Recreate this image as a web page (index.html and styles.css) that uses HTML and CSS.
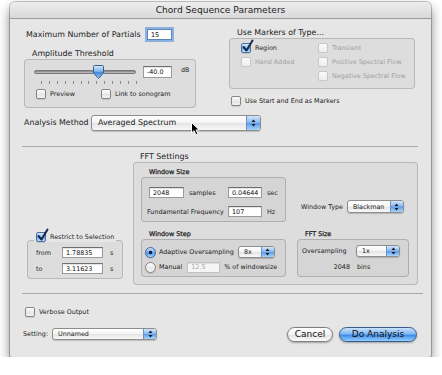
FILE: index.html
```html
<!DOCTYPE html>
<html lang="en">
<head>
	<meta charset="utf-8">
	<title>Chord Sequence Parameters</title>
	<link rel="stylesheet" href="styles.css">
</head>
<body>
	<div class="window">
		<div class="titlebar">Chord Sequence Parameters</div>
		<div class="content">
			<div class="top">
				<div class="left-col">
					<div class="partials">
						<span class="big partials-label">Maximum Number of Partials</span>
						<input class="field partials-input" type="text" value="15">
					</div>
					<div class="group-title big amp-title">Amplitude Threshold</div>
					<div class="group amp">
						<div class="slider-row">
							<div class="slider">
								<span class="track track-left"></span>
								<svg class="thumb" width="11" height="14" viewBox="0 0 11 14">
									<defs>
										<linearGradient id="thumbfill" x1="0" y1="0" x2="0" y2="1">
											<stop offset="0" stop-color="#dbeafb"/>
											<stop offset="0.45" stop-color="#7fb3ee"/>
											<stop offset="0.55" stop-color="#3f86df"/>
											<stop offset="1" stop-color="#9fd0fb"/>
										</linearGradient>
									</defs>
									<path d="M1.5 0.5 H9.5 A1 1 0 0 1 10.5 1.5 V8 L5.5 13.5 L0.5 8 V1.5 A1 1 0 0 1 1.5 0.5 Z" fill="url(#thumbfill)" stroke="#3b5d8c"/>
								</svg>
								<span class="track track-right"></span>
							</div>
							<input class="field db-input" type="text" value="-40.0">
							<span class="db">dB</span>
						</div>
						<div class="ticks">
							<i></i><i></i><i></i><i></i><i></i><i></i><i></i><i></i><i></i><i></i><i></i><i></i><i></i>
						</div>
						<div class="cb-row">
							<label class="cb"><span class="box"></span>Preview</label>
							<label class="cb"><span class="box"></span>Link to sonogram</label>
						</div>
					</div>
				</div>
				<div class="right-col">
					<div class="group-title big markers-title">Use Markers of Type...</div>
					<div class="group markers">
						<label class="cb"><span class="box on"><svg width="12" height="13" viewBox="0 0 12 13"><path d="M1.5 7 L4.5 10.5 L10.5 0.5" fill="none" stroke="#14284f" stroke-width="2" stroke-linecap="round" stroke-linejoin="round"/></svg></span>Region</label>
						<label class="cb off"><span class="box"></span>Transient</label>
						<label class="cb off"><span class="box"></span>Hand Added</label>
						<label class="cb off"><span class="box"></span>Positive Spectral Flow</label>
						<span></span>
						<label class="cb off"><span class="box"></span>Negative Spectral Flow</label>
					</div>
					<label class="cb start-end"><span class="box"></span>Use Start and End as Markers</label>
				</div>
			</div>

			<div class="method">
				<span class="big method-label">Analysis Method</span>
				<div class="popup popup-wide big">
					<span class="popup-text">Averaged Spectrum</span>
					<span class="arrows"><svg width="5" height="8" viewBox="0 0 5 8"><path d="M0.5 3 L2.5 0.5 L4.5 3Z M0.5 5 L2.5 7.5 L4.5 5Z" fill="#1b1b1b"/></svg></span>
				</div>
			</div>

			<div class="sep"></div>

			<div class="middle">
				<div class="restrict-col">
					<div class="restrict">
						<label class="cb restrict-head"><span class="box on"><svg width="12" height="13" viewBox="0 0 12 13"><path d="M1.5 7 L4.5 10.5 L10.5 0.5" fill="none" stroke="#14284f" stroke-width="2" stroke-linecap="round" stroke-linejoin="round"/></svg></span>Restrict to Selection</label>
						<div class="range-row">
							<span class="range-label">from</span>
							<input class="field range-input" type="text" value="1.78835">
							<span class="range-unit">s</span>
						</div>
						<div class="range-row">
							<span class="range-label">to</span>
							<input class="field range-input" type="text" value="3.11623">
							<span class="range-unit">s</span>
						</div>
					</div>
				</div>
				<div class="fft-col">
					<div class="group-title big fft-title">FFT Settings</div>
					<div class="group fft">
						<div class="fft-grid">
							<div class="section">
								<div class="sub-title">Window Size</div>
								<div class="subgroup size-box">
									<div class="size-grid">
										<div class="samples">
											<input class="field samples-input" type="text" value="2048">
											<span>samples</span>
										</div>
										<input class="field size-input" type="text" value="0.04644">
										<span class="unit">sec</span>
										<span class="nowrap">Fundamental Frequency</span>
										<input class="field size-input" type="text" value="107">
										<span class="unit">Hz</span>
									</div>
								</div>
							</div>
							<div class="window-type">
								<span>Window Type</span>
								<div class="popup popup-type">
									<span class="popup-text">Blackman</span>
									<span class="arrows"><svg width="5" height="8" viewBox="0 0 5 8"><path d="M0.5 3 L2.5 0.5 L4.5 3Z M0.5 5 L2.5 7.5 L4.5 5Z" fill="#1b1b1b"/></svg></span>
								</div>
							</div>
							<div class="section">
								<div class="sub-title">Window Step</div>
								<div class="subgroup step-box">
									<div class="radio-row">
										<span class="radio on"></span>
										<span>Adaptive Oversampling</span>
										<div class="popup popup-step">
											<span class="popup-text">8x</span>
											<span class="arrows"><svg width="5" height="8" viewBox="0 0 5 8"><path d="M0.5 3 L2.5 0.5 L4.5 3Z M0.5 5 L2.5 7.5 L4.5 5Z" fill="#1b1b1b"/></svg></span>
										</div>
									</div>
									<div class="radio-row">
										<span class="radio"></span>
										<span>Manual</span>
										<input class="field off manual-input" type="text" value="12.5" disabled>
										<span class="percent">% of windowsize</span>
									</div>
								</div>
							</div>
							<div class="section">
								<div class="sub-title">FFT Size</div>
								<div class="subgroup fftsize-box">
									<div class="fftsize-grid">
										<span>Oversampling</span>
										<div class="popup popup-size">
											<span class="popup-text">1x</span>
											<span class="arrows"><svg width="5" height="8" viewBox="0 0 5 8"><path d="M0.5 3 L2.5 0.5 L4.5 3Z M0.5 5 L2.5 7.5 L4.5 5Z" fill="#1b1b1b"/></svg></span>
										</div>
										<span class="bins-num">2048</span>
										<span class="bins">bins</span>
									</div>
								</div>
							</div>
						</div>
					</div>
				</div>
			</div>

			<div class="sep sep2"></div>

			<div class="bottom">
				<div class="bottom-left">
					<label class="cb verbose"><span class="box"></span>Verbose Output</label>
					<div class="setting">
						<span class="setting-label">Setting:</span>
						<div class="popup popup-setting">
							<span class="popup-text">Unnamed</span>
							<span class="arrows"><svg width="5" height="8" viewBox="0 0 5 8"><path d="M0.5 3 L2.5 0.5 L4.5 3Z M0.5 5 L2.5 7.5 L4.5 5Z" fill="#1b1b1b"/></svg></span>
						</div>
					</div>
				</div>
				<div class="buttons">
					<button class="btn cancel">Cancel</button>
					<button class="btn default">Do Analysis</button>
				</div>
			</div>
		</div>
		<svg class="cursor" width="10" height="14" viewBox="0 0 10 14">
			<path d="M0.5 0.5 L0.5 11 L3 8.7 L5 12.8 L6.9 11.9 L5 7.9 L8.3 7.9 Z" fill="#000" stroke="#fff" stroke-width="1" stroke-linejoin="round"/>
		</svg>
	</div>
</body>
</html>
```

FILE: styles.css
```css
* {
	box-sizing: border-box;
}
body {
	margin: 0;
	background: #fff;
	font-family: "DejaVu Sans", sans-serif;
	font-size: 6.4px;
	color: #1c1c1c;
}
.big {
	font-size: 7.9px;
}
.nowrap {
	white-space: nowrap;
}
.window {
	position: relative;
	width: 421px;
	height: 355px;
	margin: 2px 0 0 10px;
	background: #e6e6e6;
	border-radius: 5px 5px 2px 2px;
	box-shadow: 0 0 0 1px rgba(0, 0, 0, 0.22), 0 6px 12px rgba(0, 0, 0, 0.5);
}
.titlebar {
	height: 17px;
	line-height: 16px;
	text-align: center;
	font-size: 9.1px;
	color: #1e1e1e;
	background: linear-gradient(#ededed, #d9d9d9);
	border-bottom: 1px solid #9b9b9b;
	border-radius: 5px 5px 0 0;
}
.content {
	padding: 9px 13px 0 12px;
}

/* top part */
.top {
	display: flex;
}
.left-col {
	width: 174px;
	flex: none;
}
.partials {
	display: flex;
	align-items: center;
	height: 13px;
	padding-left: 4px;
}
.partials-label {
	width: 121px;
	white-space: nowrap;
}
.field {
	font: inherit;
	font-size: 6.4px;
	height: 11px;
	margin: 0;
	padding: 0 3px;
	color: #111;
	background: #fff;
	border: 1px solid #9a9a9a;
	border-top-color: #6f6f6f;
	box-shadow: inset 0 1px 1px rgba(0, 0, 0, 0.12);
	outline: none;
}
.field.off {
	color: #a9a9a9;
	background: #f6f6f6;
	border-color: #c2c2c2;
}
.partials-input {
	width: 25px;
	box-shadow: 0 0 0 2px #8ab2e0;
	border-color: #5d83b8;
}
.group-title {
	line-height: 10px;
	white-space: nowrap;
}
.amp-title {
	margin-top: 8px;
	padding-left: 10px;
}
.group {
	background: rgba(0, 0, 0, 0.04);
	border: 1px solid rgba(0, 0, 0, 0.17);
	border-radius: 4px;
}
.amp {
	margin-left: 2px;
	width: 172px;
	height: 49px;
	padding: 5px 0 0 9px;
}
.slider-row {
	display: flex;
	align-items: center;
	height: 14px;
}
.slider {
	display: flex;
	align-items: center;
	width: 102px;
	flex: none;
}
.track {
	height: 4px;
	background: linear-gradient(#7f7f7f, #c9c9c9);
	border: 1px solid #777;
	border-radius: 2px;
}
.track-left {
	width: 60px;
	margin-right: -1px;
}
.track-right {
	flex: 1;
	margin-left: -1px;
}
.thumb {
	flex: none;
	position: relative;
}
.db-input {
	width: 29px;
	height: 12px;
	margin-left: 7px;
}
.db {
	margin-left: 9px;
	align-self: flex-start;
	margin-top: 1px;
}
.ticks {
	display: flex;
	justify-content: space-between;
	width: 96px;
	height: 3px;
	margin: 2px 0 0 7px;
}
.ticks i {
	width: 1px;
	background: #8a8a8a;
}
.cb-row {
	display: flex;
	gap: 26px;
	height: 10px;
	align-items: center;
	margin: 5px 0 0 2px;
}

/* checkbox */
.cb {
	display: flex;
	align-items: center;
	gap: 4px;
	white-space: nowrap;
}
.box {
	position: relative;
	flex: none;
	width: 10px;
	height: 10px;
	border: 1px solid #868686;
	border-radius: 2px;
	background: linear-gradient(#fff, #e4e4e4 60%, #f4f4f4);
	box-shadow: 0 1px 1px rgba(0, 0, 0, 0.12);
}
.box.on {
	border-color: #4d6f9d;
	background: linear-gradient(#d6e8fb, #94c0ef 48%, #6ba6e7 52%, #bde0fd);
}
.box svg {
	position: absolute;
	left: 0;
	top: -4px;
	overflow: visible;
}
.cb.off {
	color: #9f9f9f;
}
.cb.off .box {
	border-color: #c6c6c6;
	background: linear-gradient(#fbfbfb, #ededed);
	box-shadow: none;
}

.right-col {
	width: 186px;
	margin-left: 33px;
	flex: none;
}
.markers-title {
	padding-left: 8px;
}
.markers {
	height: 51px;
	display: grid;
	grid-template-columns: 77px 1fr;
	grid-auto-rows: 14px;
	align-items: center;
	padding: 2px 0 0 11px;
}
.start-end {
	height: 12px;
	margin-top: 6px;
	padding-left: 2px;
}

/* popup menus */
.popup {
	display: flex;
	align-items: center;
	height: 12px;
	padding-left: 5px;
	border: 1px solid #8d8d8d;
	border-radius: 3px;
	background: linear-gradient(#fff, #f3f3f3 50%, #e4e4e4 52%, #f8f8f8);
	box-shadow: 0 1px 1px rgba(0, 0, 0, 0.18);
	overflow: hidden;
	white-space: nowrap;
}
.popup-text {
	flex: 1;
}
.arrows {
	display: flex;
	align-items: center;
	justify-content: center;
	align-self: stretch;
	width: 13px;
	flex: none;
	background: linear-gradient(#d5e7fb, #84b7f0 48%, #5b9be6 52%, #a9d5fc);
	border-left: 1px solid #6f91bf;
}
.method {
	display: flex;
	align-items: center;
	height: 17px;
	margin-top: 6px;
	padding-left: 2px;
}
.method-label {
	width: 67px;
	white-space: nowrap;
}
.popup-wide {
	width: 170px;
	height: 16px;
	padding-left: 6px;
}
.popup-wide .arrows {
	width: 14px;
}

.sep {
	height: 1px;
	background: #a9a9a9;
	margin-top: 15px;
}
.sep2 {
	margin-top: 8px;
	margin-right: -5px;
}

/* middle part */
.middle {
	display: flex;
	align-items: flex-end;
	margin-top: 4px;
}
.restrict-col {
	width: 111px;
	flex: none;
	padding: 0 0 6px 5px;
}
.restrict {
	width: 96px;
	padding: 0 0 4px 8px;
	border: 1px solid rgba(0, 0, 0, 0.17);
	border-radius: 4px;
	background: rgba(0, 0, 0, 0.04);
}
.restrict-head {
	width: fit-content;
	height: 11px;
	margin: -10px 0 0 -2px;
	padding: 0 2px;
	background: #e6e6e6;
}
.range-row {
	display: flex;
	align-items: center;
	height: 11px;
	margin-top: 5px;
}
.range-label {
	width: 26px;
}
.range-input {
	width: 41px;
}
.range-unit {
	margin-left: 7px;
}
.fft-col {
	flex: 1;
}
.fft-title {
	line-height: 11px;
	padding-left: 7px;
}
.fft {
	padding: 4px 0 7px 7px;
}
.fft-grid {
	display: grid;
	grid-template-columns: 145px 112px;
	column-gap: 11px;
	row-gap: 7px;
}
.sub-title {
	line-height: 10px;
	padding-left: 8px;
	-webkit-text-stroke: 0.25px #1c1c1c;
}
.subgroup {
	border: 1px solid rgba(0, 0, 0, 0.18);
	border-radius: 4px;
	background: rgba(0, 0, 0, 0.035);
}
.size-box {
	height: 45px;
	padding: 9px 0 0 5px;
}
.size-grid {
	display: grid;
	grid-template-columns: 77px 34px auto;
	grid-auto-rows: 11px;
	column-gap: 4px;
	row-gap: 8px;
	align-items: center;
}
.samples {
	display: flex;
	align-items: center;
	gap: 5px;
	padding-left: 2px;
}
.samples-input {
	width: 35px;
}
.size-input {
	width: 34px;
}
.unit {
	padding-left: 1px;
}
.window-type {
	display: flex;
	align-items: center;
	gap: 4px;
	align-self: end;
	margin-bottom: 9px;
	padding-left: 4px;
	white-space: nowrap;
}
.popup-type {
	width: 57px;
	height: 13px;
}
.step-box {
	height: 38px;
	padding: 6px 0 0 3px;
}
.radio-row {
	display: flex;
	align-items: center;
	gap: 3px;
	height: 12px;
	white-space: nowrap;
}
.radio-row + .radio-row {
	margin-top: 3px;
}
.radio {
	flex: none;
	width: 11px;
	height: 11px;
	border-radius: 50%;
	border: 1px solid #838383;
	background: linear-gradient(#fff, #e6e6e6 55%, #f6f6f6);
	box-shadow: 0 1px 1px rgba(0, 0, 0, 0.12);
}
.radio.on {
	border-color: #41689f;
	background: radial-gradient(circle, #15223a 0 1.6px, transparent 2.1px), linear-gradient(#cfe4fb, #76aded 48%, #4d92e3 52%, #acd8fd);
}
.popup-step {
	width: 37px;
	margin-left: 1px;
}
.manual-input {
	width: 33px;
	margin-left: 2px;
}
.percent {
	margin-left: 1px;
}
.fftsize-box {
	height: 38px;
	padding: 5px 0 0 4px;
}
.fftsize-grid {
	display: grid;
	grid-template-columns: 54px 44px;
	grid-auto-rows: 12px;
	row-gap: 4px;
	align-items: center;
	white-space: nowrap;
}
.popup-size {
	width: 44px;
}
.bins-num {
	text-align: right;
	padding-right: 6px;
}
.bins {
	padding-left: 1px;
}

/* bottom part */
.bottom {
	display: flex;
	justify-content: space-between;
	align-items: flex-end;
}
.verbose {
	height: 12px;
	margin-top: 12px;
	padding-left: 3px;
}
.setting {
	display: flex;
	align-items: center;
	height: 13px;
	margin-top: 9px;
	padding-left: 1px;
}
.setting-label {
	width: 29px;
}
.popup-setting {
	width: 105px;
}
.buttons {
	display: flex;
	gap: 6px;
	margin: 0 1px -2px 0;
}
.btn {
	height: 15px;
	padding: 0;
	font-family: "DejaVu Sans", sans-serif;
	font-size: 9px;
	line-height: 13px;
	color: #111;
	border: 1px solid #7c7c7c;
	border-radius: 8px;
	background: linear-gradient(#fff, #f3f3f3 50%, #e2e2e2 52%, #fbfbfb);
	box-shadow: 0 1px 2px rgba(0, 0, 0, 0.3);
}
.cancel {
	width: 46px;
}
.default {
	width: 78px;
	border-color: #3b5b8f;
	background: linear-gradient(#c8e2fb, #82b8f2 45%, #3f8ce7 55%, #93cfff);
}
.cursor {
	position: absolute;
	left: 181px;
	top: 120px;
	overflow: visible;
}
```
